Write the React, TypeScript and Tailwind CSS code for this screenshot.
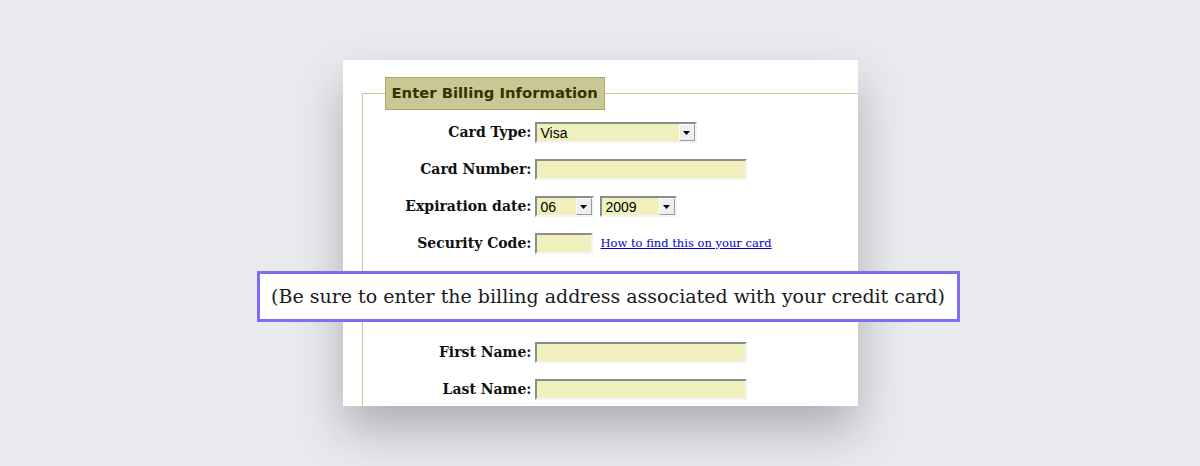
import React from 'react';

const serif = "font-['Georgia','DejaVu_Serif',serif]";

const inputBase =
  'h-[21px] bg-[#f0f0bc] border-2 border-t-[#8c8c8c] border-l-[#8c8c8c] border-r-[#f4f4f4] border-b-[#f4f4f4]';

function Select({ value, width }: { value: string; width: string }) {
  return (
    <div className={`${inputBase} ${width} flex items-center justify-between`}>
      <span className="pl-[4px] text-[14px] leading-none text-black font-['Liberation_Sans',Arial,sans-serif]">
        {value}
      </span>
      <span className="h-[17px] w-[16px] bg-[#efefef] border border-t-white border-l-white border-r-[#9a9a9a] border-b-[#9a9a9a] flex items-center justify-center">
        <svg width="7" height="4" viewBox="0 0 7 4">
          <path d="M0 0h7L3.5 4z" fill="#000" />
        </svg>
      </span>
    </div>
  );
}

function Row({ label, children }: { label: string; children: React.ReactNode }) {
  return (
    <div className="flex items-center h-[37px]">
      <div className={`w-[172px] text-right pr-[3px] text-[14px] font-bold text-[#111] ${serif}`}>{label}</div>
      <div className="flex items-center gap-[6px]">{children}</div>
    </div>
  );
}

export default function App() {
  return (
    <div className="w-full h-[466px] bg-[#e9eaee] flex justify-center pt-[60px]">
      <div className="relative w-[515px] h-[346px]">
        <div className="w-full h-full bg-white overflow-hidden shadow-[0_24px_44px_rgba(0,0,0,0.25)]">
          <fieldset className="ml-[19px] mt-[17px] w-[600px] h-[400px] border-l border-t border-[#cbc99a] px-0 pt-[4px]">
            <legend className="ml-[22px] px-[6px] h-[33px] flex items-center bg-[#c9c894] border border-[#aaa862] text-[14.8px] font-bold text-[#333300] font-['DejaVu_Sans',Verdana,sans-serif]">
              Enter Billing Information
            </legend>
            <Row label="Card Type:">
              <Select value="Visa" width="w-[162px]" />
            </Row>
            <Row label="Card Number:">
              <div className={`${inputBase} w-[212px]`} />
            </Row>
            <Row label="Expiration date:">
              <Select value="06" width="w-[59px]" />
              <Select value="2009" width="w-[77px]" />
            </Row>
            <Row label="Security Code:">
              <div className={`${inputBase} w-[58px]`} />
              <a href="#" className={`ml-[2px] text-[11.5px] text-[#0000cc] underline ${serif}`}>
                How to find this on your card
              </a>
            </Row>
            <div className="h-[72px]" />
            <Row label="First Name:">
              <div className={`${inputBase} w-[212px]`} />
            </Row>
            <Row label="Last Name:">
              <div className={`${inputBase} w-[212px]`} />
            </Row>
          </fieldset>
        </div>
        <div
          className={`absolute left-[-86px] top-[211px] w-[703px] h-[51px] bg-white border-[3px] border-[#7b70f4] flex items-center justify-center text-[19px] text-[#1a1a1a] ${serif}`}
        >
          (Be sure to enter the billing address associated with your credit card)
        </div>
      </div>
    </div>
  );
}
